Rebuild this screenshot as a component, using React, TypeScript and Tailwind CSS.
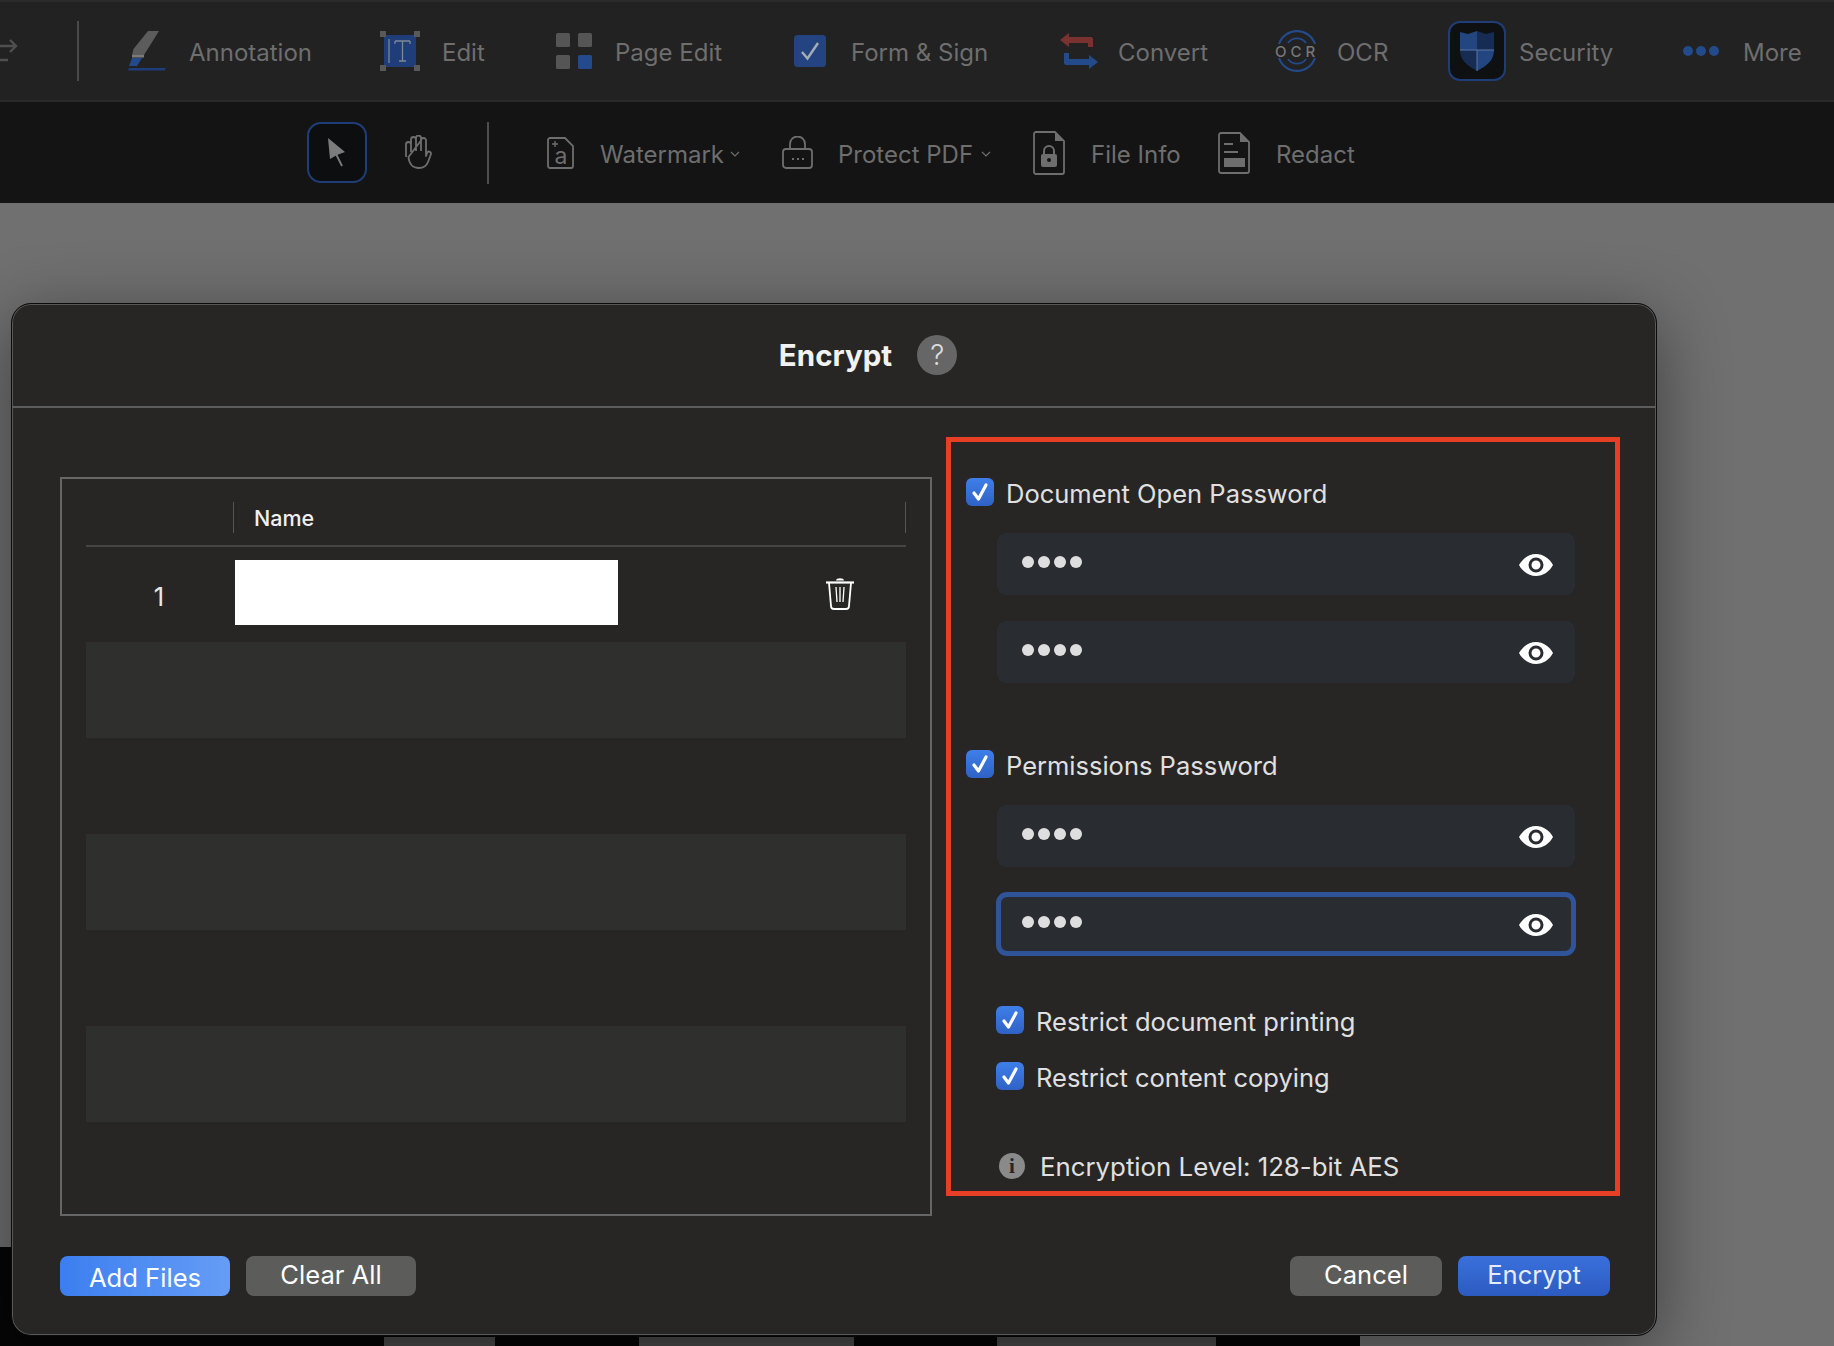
// Password dots + eye toggle
function PasswordField({ focused }: { focused?: boolean }) {
  const box = focused
    ? 'h-[64px] w-[580px] -ml-px border-[5px] border-[#2f5499] rounded-[11px] pl-[21px] pr-[19px]'
    : 'h-[62px] w-[578px] rounded-[9px] pl-[25px] pr-[23px]';
  return (
    <div className={`flex items-center justify-between bg-[#292c31] ${box}`}>
      <div className="flex gap-[4px] -mt-[4px]">
        {[0, 1, 2, 3].map((i) => (
          <span key={i} className="h-[12px] w-[12px] rounded-full bg-[#dedede]" />
        ))}
      </div>
      <svg width="34" height="22" viewBox="0 0 34 22" className="-mr-px mt-[2px]">
        <path d="M0 11C4 4 10 0 17 0s13 4 17 11c-4 7-10 11-17 11S4 18 0 11z" fill="#fff" />
        <circle cx="17" cy="11" r="6" fill="#fff" stroke="#292c31" strokeWidth="3" />
      </svg>
    </div>
  );
}

function CheckMark() {
  return (
    <span className="flex h-[28px] w-[28px] shrink-0 items-center justify-center rounded-[6px] bg-gradient-to-b from-[#3f7fe9] to-[#2f62c6]">
      <svg width="18" height="20" viewBox="0 0 18 20" fill="none">
        <path d="M3 11l4.500 6L15 3" stroke="#fff" strokeWidth="3.200" strokeLinecap="round" strokeLinejoin="round" />
      </svg>
    </span>
  );
}

function CheckRow({ label, className }: { label: string; className?: string }) {
  return (
    <div className={`flex h-[28px] items-center gap-[12px] ${className ?? ''}`}>
      <CheckMark />
      <span className="whitespace-nowrap pt-[4px] text-[25.5px] text-[#e0e0e0]">{label}</span>
    </div>
  );
}

function Label({ className, children }: { className: string; children: string }) {
  return <span className={`whitespace-nowrap pt-[4px] text-[24px] text-[#6e6e6e] ${className}`}>{children}</span>;
}

function Chevron({ className }: { className: string }) {
  return (
    <svg width="10" height="6" viewBox="0 0 10 6" fill="none" className={className}>
      <path d="M1 1l4 4 4-4" stroke="#6e6e6e" strokeWidth="1.200" />
    </svg>
  );
}

function TopBar() {
  return (
    <div className="flex h-[102px] items-center border-t-2 border-b-2 border-[#2a2a2a] bg-[#222222]">
      <svg width="18" height="24" viewBox="0 0 18 24" fill="none" className="shrink-0">
        <path d="M0 7h14M10 1l6 6-6 6M8 21H0" stroke="#505050" strokeWidth="2.400" />
      </svg>
      <div className="ml-[59px] h-[60px] w-[2px] bg-[#4a4a4a]" />

      <svg width="38" height="40" viewBox="0 0 38 40" className="ml-[49px] shrink-0">
        <path d="M20 0h11L16 24H4l1.500-6z" fill="#5c5c5c" />
        <path d="M4 24h12v2.500H4z" fill="#7a7a7a" />
        <path d="M4 27h10l-5 8H1z" fill="#234a8a" />
        <path d="M1 37h37l-1.500 2.500H0z" fill="#1f3d78" />
      </svg>
      <Label className="ml-[23px] w-[122px]">Annotation</Label>

      <svg width="40" height="40" viewBox="0 0 40 40" className="ml-[69px] shrink-0">
        <rect x="4" y="4" width="32" height="32" fill="#1f3d78" />
        {[[0, 0], [34, 0], [0, 34], [34, 34]].map(([x, y]) => (
          <rect key={`${x}-${y}`} x={x} y={y} width="6" height="6" fill="#595959" />
        ))}
        <path d="M9 8v24M15 10h15M15 10v3M30 10v3M22.500 10v20M19 30h7" stroke="#7d8798" strokeWidth="1.300" fill="none" />
      </svg>
      <Label className="ml-[22px] w-[43px]">Edit</Label>

      <svg width="36" height="36" viewBox="0 0 36 36" className="ml-[71px] shrink-0">
        <rect x="0" y="0" width="14" height="14" rx="1.500" fill="#555" />
        <rect x="22" y="0" width="14" height="14" rx="1.500" fill="#555" />
        <rect x="0" y="22" width="14" height="14" rx="1.500" fill="#555" />
        <rect x="22" y="22" width="14" height="14" rx="1.500" fill="#234a8a" />
      </svg>
      <Label className="ml-[23px] w-[106px]">Page Edit</Label>

      <svg width="32" height="32" viewBox="0 0 32 32" className="ml-[73px] shrink-0">
        <rect width="32" height="32" rx="3.500" fill="#234480" />
        <path d="M8 17l5.500 6.500L24 8" stroke="#a5adb8" strokeWidth="2.400" fill="none" />
      </svg>
      <Label className="ml-[25px] w-[138px]">Form &amp; Sign</Label>

      <svg width="38" height="36" viewBox="0 0 38 36" className="ml-[71px] shrink-0">
        <path d="M0 7l9-7v4h22a2 2 0 0 1 2 2v8h-5V10H9v4z" fill="#7a3230" />
        <path d="M4 20h5v6h20v-4l9 7-9 7v-4H6a2 2 0 0 1-2-2z" fill="#234a8a" />
      </svg>
      <Label className="ml-[20px] w-[88px]">Convert</Label>

      <svg width="40" height="40" viewBox="0 0 40 40" className="ml-[71px] shrink-0 overflow-visible">
        <path d="M2 13A19 19 0 0 1 38 13M2 27A19 19 0 0 0 38 27" stroke="#234a8a" strokeWidth="2.200" fill="none" />
        <path d="M11 12A11 11 0 0 1 29 12M11 28A11 11 0 0 0 29 28" stroke="#234a8a" strokeWidth="1.800" fill="none" />
        <text x="20" y="25.500" textAnchor="middle" fontSize="15" letterSpacing="4" fill="#777" fontWeight="500">OCR</text>
      </svg>
      <Label className="ml-[20px] w-[50px]">OCR</Label>

      <div className="ml-[61px] flex h-[60px] w-[58px] shrink-0 items-center justify-center rounded-[12px] border-2 border-[#1f3d78] bg-[#0e1011]">
        <svg width="36" height="40" viewBox="0 0 36 40">
          <path d="M1 1l8 2 9-3v19H1z" fill="#234680" />
          <path d="M18 0l9 3 8-2v18H18z" fill="#172c52" />
          <path d="M1 19h17v21C9 35 1 30 1 19z" fill="#172c52" />
          <path d="M18 19h17c0 11-8 16-17 21z" fill="#234680" />
          <path d="M1 19h34M18 19v21" stroke="#5a77a6" strokeWidth="1" />
        </svg>
      </div>
      <Label className="ml-[13px] w-[92px]">Security</Label>

      <div className="ml-[72px] flex w-[36px] shrink-0 justify-between">
        <span className="h-[10px] w-[10px] rounded-full bg-[#234a8a]" />
        <span className="h-[10px] w-[10px] rounded-full bg-[#234a8a]" />
        <span className="h-[10px] w-[10px] rounded-full bg-[#234a8a]" />
      </div>
      <Label className="ml-[24px] w-[56px]">More</Label>
    </div>
  );
}

function SubBar() {
  return (
    <div className="flex h-[101px] items-center bg-[#141414] pl-[307px]">
      <div className="flex h-[61px] w-[60px] shrink-0 items-center justify-center rounded-[14px] border-2 border-[#1f3d78] bg-[#0c0e0f]">
        <svg width="18" height="30" viewBox="0 0 18 30">
          <path d="M0 0l17 14-8 3-7 4z" fill="#7c7c7c" />
          <path d="M8 16l6 12" stroke="#7c7c7c" strokeWidth="1.800" />
        </svg>
      </div>
      <svg width="27" height="35" viewBox="0 0 27 35" fill="none" className="ml-[38px] shrink-0">
        <path
          d="M1 22V9.500a2.500 2.500 0 0 1 5 0V17M6 9.500V4.500a2.500 2.500 0 0 1 5 0V16M11 4.500V3a2.500 2.500 0 0 1 5 0V16M16 5.500a2.500 2.500 0 0 1 5 0V21l1.500-4a2.200 2.200 0 0 1 3.500 2l-3 8c-1.500 4-5 6-9 6-6 0-10-4-10.500-11z"
          stroke="#6e6e6e"
          strokeWidth="1.800"
          strokeLinejoin="round"
        />
      </svg>
      <div className="ml-[55px] h-[62px] w-[2px] shrink-0 bg-[#4f4f4f]" />

      <svg width="27" height="32" viewBox="0 0 27 32" fill="none" className="ml-[58px] shrink-0">
        <path d="M3 1h15l8 8v20a2 2 0 0 1-2 2H3a2 2 0 0 1-2-2V3a2 2 0 0 1 2-2z" stroke="#6e6e6e" strokeWidth="1.800" />
        <path d="M5 7h6M8 4v6" stroke="#6e6e6e" strokeWidth="1.400" />
        <text x="14" y="26.500" textAnchor="middle" fontSize="23" fill="#6e6e6e">a</text>
      </svg>
      <Label className="ml-[26px] w-[122px]">Watermark</Label>
      <Chevron className="ml-[8px] mt-[3px] shrink-0" />

      <svg width="31" height="33" viewBox="0 0 31 33" fill="none" className="ml-[42px] shrink-0">
        <path d="M8 13V8a7.500 7.500 0 0 1 15 0v5" stroke="#6e6e6e" strokeWidth="1.800" />
        <rect x="1" y="13" width="29" height="19" rx="3" stroke="#6e6e6e" strokeWidth="1.800" />
        <path d="M10 23h2M15 23h2M20 23h2" stroke="#6e6e6e" strokeWidth="2.200" />
      </svg>
      <Label className="ml-[25px] w-[135px]">Protect PDF</Label>
      <Chevron className="ml-[8px] mt-[3px] shrink-0" />

      <svg width="32" height="44" viewBox="0 0 32 44" fill="none" className="ml-[42px] shrink-0">
        <path d="M3 1h19l9 9v31a2 2 0 0 1-2 2H3a2 2 0 0 1-2-2V3a2 2 0 0 1 2-2z" stroke="#6e6e6e" strokeWidth="1.800" />
        <path d="M22 1v9h9z" fill="#6e6e6e" />
        <rect x="8" y="23" width="16" height="13" rx="2" fill="#6e6e6e" />
        <path d="M11 23v-3a5 5 0 0 1 10 0v3" stroke="#6e6e6e" strokeWidth="2" />
        <circle cx="16" cy="29" r="2" fill="#141414" />
      </svg>
      <Label className="ml-[26px] w-[88px]">File Info</Label>

      <svg width="32" height="42" viewBox="0 0 32 42" fill="none" className="ml-[39px] shrink-0">
        <path d="M3 1h19l9 9v29a2 2 0 0 1-2 2H3a2 2 0 0 1-2-2V3a2 2 0 0 1 2-2z" stroke="#6e6e6e" strokeWidth="1.800" />
        <path d="M22 1v9h9z" fill="#6e6e6e" />
        <path d="M6 12h9M6 20h14" stroke="#6e6e6e" strokeWidth="2" />
        <rect x="6" y="26" width="21" height="9" fill="#6e6e6e" />
      </svg>
      <Label className="ml-[26px] w-[78px]">Redact</Label>
    </div>
  );
}

function FileTable() {
  return (
    <div className="mt-[69px] h-[739px] w-[872px] shrink-0 border-2 border-[#666666] pl-[24px] pt-[23px]">
      <div className="flex h-[31px] w-[820px] items-center border-r border-[#555555]">
        <div className="ml-[147px] h-full w-px bg-[#555555]" />
        <span className="ml-[20px] pt-[2px] text-[21.5px] font-medium text-[#f0f0f0]">Name</span>
      </div>
      <div className="mt-[12px] h-[2px] w-[820px] bg-[#454545]" />
      <div className="flex h-[95px] w-[820px] items-start">
        <span className="mt-[31px] w-[146px] text-center text-[25.6px] text-[#e8e8e8]">1</span>
        <div className="ml-[3px] mt-[13px] h-[65px] w-[383px] bg-white" />
        <svg width="28" height="33" viewBox="0 0 28 33" fill="none" className="ml-[208px] mt-[30px]">
          <path d="M10 3.500c0-3 8-3 8 0z" fill="#fff" />
          <path d="M0 5.500h28" stroke="#fff" strokeWidth="2.200" />
          <path d="M3 6l2 23a3 3 0 0 0 3 3h12a3 3 0 0 0 3-3l2-23" stroke="#fff" strokeWidth="1.800" />
          <path d="M10 10l1 15M14 10v15M18 10l-1 15" stroke="#fff" strokeWidth="1.300" />
        </svg>
      </div>
      {[1, 2, 3, 4, 5].map((row) => (
        <div key={row} className={`h-[96px] w-[820px] ${row % 2 === 1 ? 'bg-[#2f2f2e]' : ''}`} />
      ))}
    </div>
  );
}

function SecurityPanel() {
  return (
    <div className="ml-[14px] mt-[29px] flex h-[759px] w-[674px] shrink-0 flex-col border-[5px] border-[#e63f24] pl-[15px] pt-[36px]">
      <CheckRow label="Document Open Password" />
      <div className="ml-[31px] mt-[27px]">
        <PasswordField />
      </div>
      <div className="ml-[31px] mt-[26px]">
        <PasswordField />
      </div>
      <CheckRow label="Permissions Password" className="mt-[67px]" />
      <div className="ml-[31px] mt-[27px]">
        <PasswordField />
      </div>
      <div className="ml-[31px] mt-[25px]">
        <PasswordField focused />
      </div>
      <CheckRow label="Restrict document printing" className="ml-[30px] mt-[50px]" />
      <CheckRow label="Restrict content copying" className="ml-[30px] mt-[28px]" />
      <div className="ml-[33px] mt-[63px] flex h-[26px] items-center gap-[15px]">
        <span className="flex h-[26px] w-[26px] items-center justify-center rounded-full bg-[#8a8a8a] [font-family:'Liberation_Serif',serif] text-[21px] font-bold leading-none text-[#272625]">
          i
        </span>
        <span className="whitespace-nowrap pt-[3px] text-[25.8px] text-[#e0e0e0]">Encryption Level: 128-bit AES</span>
      </div>
    </div>
  );
}

export default function App() {
  return (
    <div className="relative flex h-[1346px] w-[1834px] flex-col overflow-hidden bg-[#707070] [font-family:Inter,sans-serif]">
      <TopBar />
      <SubBar />
      <div className="flex-1" />

      {/* dark page strip peeking out under the dialog */}
      <div className="flex h-[99px] w-[1360px] items-end bg-[#060606]">
        <div className="ml-[384px] h-[9px] w-[111px] bg-[#4b4b4b]" />
        <div className="ml-[144px] h-[9px] w-[215px] bg-[#4b4b4b]" />
        <div className="ml-[143px] h-[9px] w-[219px] bg-[#4b4b4b]" />
      </div>

      {/* Encrypt dialog */}
      <div className="absolute left-[11px] top-[303px] flex h-[1033px] w-[1646px] flex-col rounded-[20px] border border-[#0a0a0a] bg-[#272625] shadow-[0_16px_70px_rgba(0,0,0,0.45),inset_0_0_0_1px_#585858]">
        <div className="flex h-[104px] shrink-0 items-center justify-center border-b-2 border-[#5c5c5c] pl-[68px]">
          <span className="text-[29.5px] font-bold text-[#f2f2f2]">Encrypt</span>
          <span className="ml-[25px] flex h-[40px] w-[40px] items-center justify-center rounded-full bg-[#666666] text-[28px] font-light text-[#dddddd]">
            ?
          </span>
        </div>

        <div className="flex h-[848px] shrink-0 items-start pl-[48px]">
          <FileTable />
          <SecurityPanel />
        </div>

        <div className="flex h-[40px] shrink-0 items-center pl-[48px] pr-[46px] text-[25.6px] text-white">
          <button className="h-[40px] w-[170px] rounded-[8px] bg-gradient-to-r from-[#3c7ef0] to-[#659df6] pt-[3px]">
            Add Files
          </button>
          <button className="ml-[16px] h-[40px] w-[170px] rounded-[8px] bg-[#5c5c5b] pb-[1px]">Clear All</button>
          <button className="ml-auto h-[40px] w-[152px] rounded-[8px] bg-[#5c5c5b] pb-[1px]">Cancel</button>
          <button className="ml-[16px] h-[40px] w-[152px] rounded-[8px] bg-gradient-to-b from-[#3a70dc] to-[#2c5bc0] pb-[1px] text-[#e6ecfa]">
            Encrypt
          </button>
        </div>
      </div>
    </div>
  );
}
